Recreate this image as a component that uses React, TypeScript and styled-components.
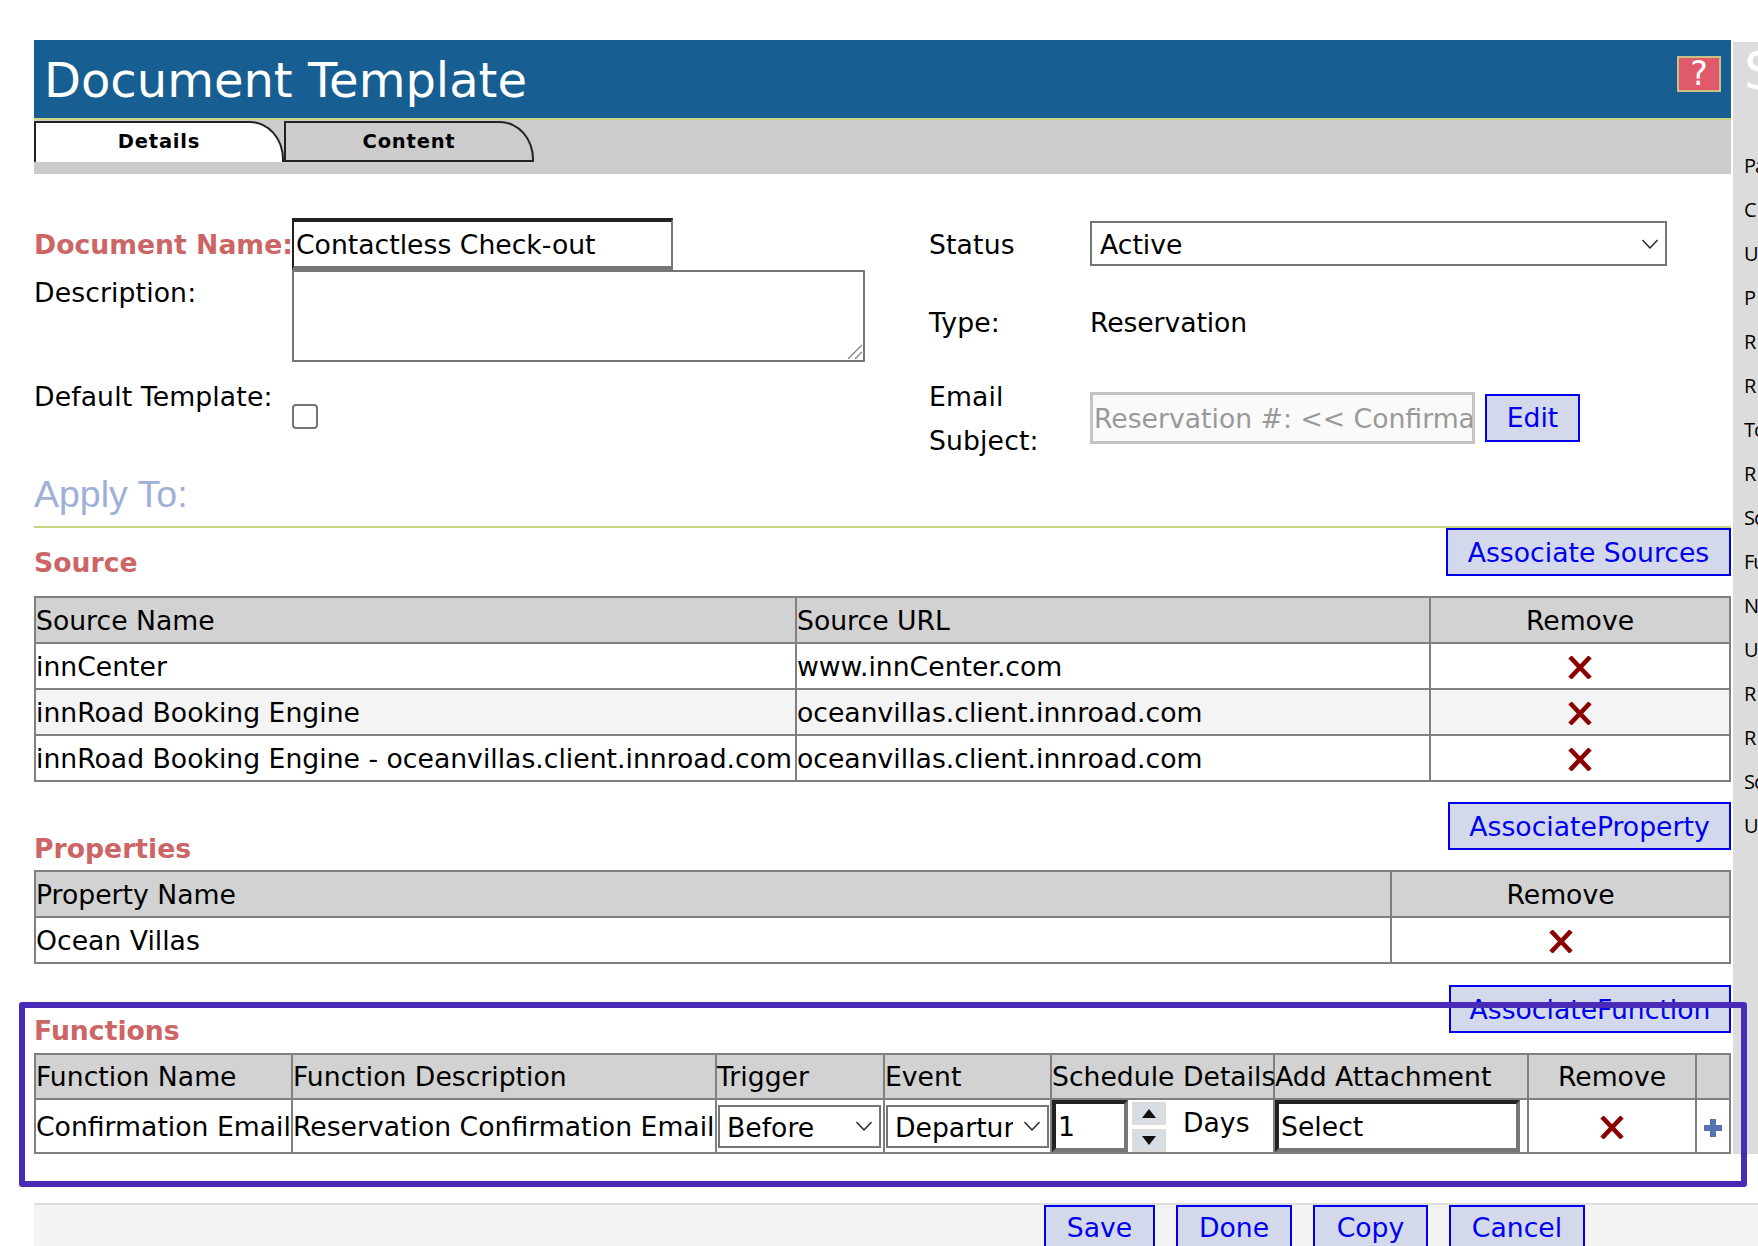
import React from "react";
import styled, { createGlobalStyle } from "styled-components";

const Global = createGlobalStyle`
  html, body { margin: 0; padding: 0; background: #fff; }
  body { width: 1758px; height: 1246px; overflow: hidden; font-family: "DejaVu Sans", Verdana, sans-serif; font-size: 26.67px; color: #000; }
`;

const chevron = `url("data:image/svg+xml,%3Csvg xmlns='http://www.w3.org/2000/svg' width='18' height='10' viewBox='0 0 18 10'%3E%3Cpath d='M1.5 1 L9 9 L16.5 1' fill='none' stroke='%23222' stroke-width='1.4'/%3E%3C/svg%3E")`;

const Page = styled.div`
  width: 1758px;
  height: 1246px;
  overflow: hidden;
  padding-top: 40px;
  box-sizing: border-box;
`;
const TopRow = styled.div`display: flex; align-items: stretch;`;
const Main = styled.main`width: 1697px; margin-left: 34px; flex: none;`;

const Sidebar = styled.aside`
  flex: 1;
  min-width: 0;
  margin: 2px 0 0 2px;
  padding-left: 11px;
  background: #dcdcdc;
  overflow: hidden;
  white-space: nowrap;
`;
const SideTitle = styled.div`
  height: 102px;
  font-size: 52px;
  line-height: 58px;
  color: #fff;
`;
const SideItem = styled.div`
  height: 44px;
  line-height: 44px;
  font-family: "Open Sans", sans-serif;
  font-size: 20px;
  letter-spacing: -1px;
`;

const Header = styled.header`
  height: 78px;
  background: #175e93;
  border-bottom: 2px solid #ccd67e;
  display: flex;
  align-items: center;
  justify-content: space-between;
  padding: 0 10px 0 10px;
`;
const Title = styled.h1`
  margin: 2px 0 0;
  font-size: 48px;
  font-weight: 400;
  color: #fff;
`;
const Help = styled.div`
  align-self: flex-start;
  width: 44px;
  height: 36px;
  margin-top: 16px;
  box-sizing: border-box;
  background: #e15a6c;
  border: 2px solid #c9c081;
  color: #fff;
  font-size: 33px;
  line-height: 32px;
  text-align: center;
`;

const TabBand = styled.nav`
  height: 54px;
  box-sizing: border-box;
  padding-top: 1px;
  background: #cccccc;
  display: flex;
`;
const Tab = styled.div<{ $active?: boolean }>`
  width: 250px;
  height: 41px;
  box-sizing: border-box;
  border: 2px solid #222;
  border-bottom: ${(p) => (p.$active ? "none" : "2px solid #222")};
  border-top-right-radius: 34px 38px;
  background: ${(p) => (p.$active ? "#fff" : "#cccccc")};
  font-size: 19.5px;
  font-weight: 700;
  letter-spacing: 0.8px;
  line-height: 38px;
  text-align: center;
`;

const FormArea = styled.section`
  display: flex;
  padding-top: 44px;
`;
const LeftForm = styled.div`
  width: 895px;
  flex: none;
  display: grid;
  grid-template-columns: 258px 1fr;
  grid-template-rows: 52px 92px 101px;
  align-content: start;
`;
const Label = styled.div<{ $required?: boolean }>`
  line-height: 44px;
  font-weight: ${(p) => (p.$required ? 700 : 400)};
  color: ${(p) => (p.$required ? "#cc6666" : "#000")};
  letter-spacing: ${(p) => (p.$required ? "0" : "0.12px")};
  white-space: nowrap;
`;
const NameLabel = styled(Label)`padding-top: 1px; line-height: 52px;`;
const DescLabel = styled(Label)`padding-top: 1px;`;
const DefaultLabel = styled(Label)`padding-top: 13px;`;

const InsetInput = styled.input<{ $w: number }>`
  display: block;
  width: ${(p) => p.$w}px;
  height: 52px;
  box-sizing: border-box;
  padding: 0 0 0 2px;
  margin: 0;
  border-style: solid;
  border-width: 4px;
  border-color: #222 #767676 #767676 #222;
  background: #fff;
  outline: none;
  font: inherit;
  color: #000;
`;
const NameInput = styled(InsetInput)`
  border-width: 4px 2px 4px 2px;
`;
const DescWrap = styled.div`
  position: relative;
  width: 573px;
  height: 92px;
`;
const DescBox = styled.textarea`
  display: block;
  width: 573px;
  height: 92px;
  box-sizing: border-box;
  border: 2px solid #767676;
  background: #fff;
  margin: 0;
  padding: 0;
  outline: none;
  resize: none;
  font: inherit;
`;
const Grip = styled.svg`
  position: absolute;
  right: 3px;
  bottom: 3px;
`;
const Check = styled.input`
  appearance: none;
  display: block;
  width: 26px;
  height: 25px;
  box-sizing: border-box;
  margin: 42px 0 0 0;
  border: 2px solid #767676;
  border-radius: 4px;
  background: #fff;
`;

const RightForm = styled.div`
  flex: 1;
  display: grid;
  grid-template-columns: 161px 1fr;
  grid-template-rows: 51px 106px 88px;
  align-content: start;
`;
const StatusLabel = styled(Label)`padding-top: 1px; line-height: 52px;`;
const StatusSelect = styled.select`
  display: block;
  appearance: none;
  width: 577px;
  height: 45px;
  margin-top: 3px;
  box-sizing: border-box;
  padding: 2px 30px 0 8px;
  border: 2px solid #767676;
  border-radius: 0;
  background: #fff ${chevron} no-repeat right 6px center;
  font: inherit;
  color: #000;
`;
const TypeLabel = styled(Label)`padding-top: 32px;`;
const TypeValue = styled(TypeLabel)`letter-spacing: -0.1px;`;
const SubjectRow = styled.div`
  display: flex;
  align-items: flex-start;
  gap: 10px;
  padding-top: 17px;
`;
const SubjectInput = styled.input`
  width: 385px;
  height: 52px;
  box-sizing: border-box;
  padding: 0 0 0 1px;
  border: 3px solid #c4c4c4;
  background: #fafafa;
  color: #999;
  font: inherit;
  outline: none;
`;

const ActionButton = styled.button<{ $w: number }>`
  flex: none;
  width: ${(p) => p.$w}px;
  height: 48px;
  box-sizing: border-box;
  padding: 2px 0 0;
  border: 2px solid #0000ee;
  background: #d3d9ea;
  color: #0000ee;
  font: inherit;
  line-height: 42px;
  white-space: nowrap;
`;
const EditButton = styled(ActionButton)`margin-top: 2px; padding: 0;`;
const FooterButton = styled(ActionButton)`padding: 0 0 3px;`;

const ApplyTo = styled.h2`
  margin: 0;
  height: 65px;
  box-sizing: border-box;
  padding-top: 8px;
  border-bottom: 2px solid #c8d484;
  font-family: "Liberation Sans", Arial, sans-serif;
  font-size: 37.5px;
  line-height: 46px;
  font-weight: 400;
  color: #9fb0d8;
`;

const Section = styled.section<{ $top?: number }>`
  position: relative;
  margin-top: ${(p) => p.$top ?? 0}px;
`;
const SectionHead = styled.div<{ $h: number }>`
  height: ${(p) => p.$h}px;
  display: flex;
  justify-content: space-between;
  align-items: flex-start;
`;
const SectionTitle = styled.h3<{ $top: number }>`
  margin: 0;
  padding-top: ${(p) => p.$top}px;
  font-size: 26.67px;
  line-height: 44px;
  font-weight: 700;
  color: #cc6666;
`;

const Grid = styled.table`
  width: 1697px;
  table-layout: fixed;
  border-collapse: collapse;
  font-size: 26.67px;
  box-sizing: border-box;
`;
const Col = styled.col<{ $w?: number }>`
  width: ${(p) => (p.$w ? `${p.$w}px` : "auto")};
`;
const Th = styled.th<{ $center?: boolean }>`
  height: 44px;
  padding: 0;
  border: 2px solid #808080;
  background: #d2d2d2;
  font-weight: 400;
  text-align: ${(p) => (p.$center ? "center" : "left")};
  white-space: nowrap;
`;
const FuncTh = styled(Th)`height: 43px;`;
const Td = styled.td<{ $center?: boolean; $alt?: boolean }>`
  height: 44px;
  padding: 0;
  border: 2px solid #808080;
  background: ${(p) => (p.$alt ? "#f4f4f4" : "#fff")};
  text-align: ${(p) => (p.$center ? "center" : "left")};
  white-space: nowrap;
  vertical-align: middle;
`;
const FuncTd = styled(Td)`height: 52px;`;

const IconWrap = styled.span`
  display: inline-flex;
  vertical-align: middle;
  margin-top: -1px;
`;
const RemoveIcon = () => (
  <IconWrap>
    <svg width="24" height="23" viewBox="0 0 24 23" aria-hidden="true">
      <path d="M2 1 L22 22 M22 1 L2 22" stroke="#8b0000" strokeWidth="4.6" fill="none" />
    </svg>
  </IconWrap>
);
const AddIcon = () => (
  <IconWrap>
    <svg width="20" height="20" viewBox="0 0 20 20" aria-hidden="true">
      <path d="M7 1 H13 V7 H19 V13 H13 V19 H7 V13 H1 V7 H7 Z" fill="#5572b5" />
    </svg>
  </IconWrap>
);

const CellSelect = styled.select`
  display: block;
  appearance: none;
  height: 43px;
  width: 163px;
  margin: 0 0 0 1px;
  box-sizing: border-box;
  padding: 2px 34px 0 7px;
  border: 2px solid #767676;
  border-radius: 0;
  background: #fff ${chevron} no-repeat right 6px center;
  color: #000;
  font: inherit;
`;
const ScheduleCell = styled.div`
  display: flex;
  align-items: flex-start;
  height: 52px;
`;
const SpinnerColumn = styled.div`
  width: 34px;
  margin-left: 4px;
  padding-top: 2px;
  display: flex;
  flex-direction: column;
  gap: 4px;
`;
const SpinButton = styled.button`
  width: 34px;
  height: 23px;
  padding: 0;
  box-sizing: border-box;
  border: 3px solid #dcdcdc;
  background: #d6dde4;
  display: flex;
  align-items: center;
  justify-content: center;
`;
const Days = styled.span`
  margin-left: 17px;
  line-height: 46px;
`;

const Highlight = styled.div`
  position: absolute;
  left: -15px;
  right: -16px;
  top: 17px;
  bottom: -33px;
  border: 6px solid #4a2bb8;
  border-radius: 3px;
  pointer-events: none;
  z-index: 2;
`;

const Footer = styled.footer`
  margin: 49px 0 0 34px;
  height: 60px;
  box-sizing: border-box;
  padding: 0 0 0 1010px;
  border-top: 2px solid #dddddd;
  background: #f3f3f3;
  display: flex;
  gap: 21px;
`;

const sideItems = ["Pa", "C", "U", "P", "R", "R", "To", "R", "Sc", "Fu", "N", "U", "R", "R", "Sc", "U"];
const sources = [
  ["innCenter", "www.innCenter.com"],
  ["innRoad Booking Engine", "oceanvillas.client.innroad.com"],
  ["innRoad Booking Engine - oceanvillas.client.innroad.com", "oceanvillas.client.innroad.com"],
];

export default function App() {
  return (
    <Page>
      <Global />
      <TopRow>
        <Main>
          <Header>
            <Title>Document Template</Title>
            <Help>?</Help>
          </Header>
          <TabBand>
            <Tab $active>Details</Tab>
            <Tab>Content</Tab>
          </TabBand>

          <FormArea>
            <LeftForm>
              <NameLabel $required>Document Name:</NameLabel>
              <NameInput $w={381} defaultValue="Contactless Check-out" />
              <DescLabel>Description:</DescLabel>
              <DescWrap>
                <DescBox />
                <Grip width="15" height="15" viewBox="0 0 15 15" aria-hidden="true">
                  <path d="M1 15 L15 1 M8 15 L15 8" stroke="#777" strokeWidth="1.2" fill="none" />
                </Grip>
              </DescWrap>
              <DefaultLabel>Default Template:</DefaultLabel>
              <Check type="checkbox" />
            </LeftForm>
            <RightForm>
              <StatusLabel>Status</StatusLabel>
              <StatusSelect defaultValue="Active"><option>Active</option></StatusSelect>
              <TypeLabel>Type:</TypeLabel>
              <TypeValue>Reservation</TypeValue>
              <Label>Email<br />Subject:</Label>
              <SubjectRow>
                <SubjectInput disabled value="Reservation #: << Confirmation Number >>" readOnly />
                <EditButton $w={95}>Edit</EditButton>
              </SubjectRow>
            </RightForm>
          </FormArea>

          <ApplyTo>Apply To:</ApplyTo>

          <Section>
            <SectionHead $h={68}>
              <SectionTitle $top={13}>Source</SectionTitle>
              <ActionButton $w={285}>Associate Sources</ActionButton>
            </SectionHead>
            <Grid>
              <colgroup><Col $w={761} /><Col $w={634} /><Col /></colgroup>
              <thead>
                <tr><Th>Source Name</Th><Th>Source URL</Th><Th $center>Remove</Th></tr>
              </thead>
              <tbody>
                {sources.map(([name, url], i) => (
                  <tr key={name}>
                    <Td $alt={i === 1}>{name}</Td>
                    <Td $alt={i === 1}>{url}</Td>
                    <Td $alt={i === 1} $center><RemoveIcon /></Td>
                  </tr>
                ))}
              </tbody>
            </Grid>
          </Section>

          <Section $top={20}>
            <SectionHead $h={68}>
              <SectionTitle $top={25}>Properties</SectionTitle>
              <ActionButton $w={283}>AssociateProperty</ActionButton>
            </SectionHead>
            <Grid>
              <colgroup><Col $w={1356} /><Col /></colgroup>
              <thead>
                <tr><Th>Property Name</Th><Th $center>Remove</Th></tr>
              </thead>
              <tbody>
                <tr><Td>Ocean Villas</Td><Td $center><RemoveIcon /></Td></tr>
              </tbody>
            </Grid>
          </Section>

          <Section $top={21}>
            <SectionHead $h={68}>
              <SectionTitle $top={24}>Functions</SectionTitle>
              <ActionButton $w={282}>AssociateFunction</ActionButton>
            </SectionHead>
            <Grid>
              <colgroup>
                <Col $w={257} /><Col $w={424} /><Col $w={168} /><Col $w={167} />
                <Col $w={223} /><Col $w={254} /><Col $w={168} /><Col />
              </colgroup>
              <thead>
                <tr>
                  <FuncTh>Function Name</FuncTh>
                  <FuncTh>Function Description</FuncTh>
                  <FuncTh>Trigger</FuncTh>
                  <FuncTh>Event</FuncTh>
                  <FuncTh>Schedule Details</FuncTh>
                  <FuncTh>Add Attachment</FuncTh>
                  <FuncTh $center>Remove</FuncTh>
                  <FuncTh />
                </tr>
              </thead>
              <tbody>
                <tr>
                  <FuncTd>Confirmation Email</FuncTd>
                  <FuncTd>Reservation Confirmation Email</FuncTd>
                  <FuncTd>
                    <CellSelect defaultValue="Before"><option>Before</option></CellSelect>
                  </FuncTd>
                  <FuncTd>
                    <CellSelect defaultValue="Departure"><option>Departure</option></CellSelect>
                  </FuncTd>
                  <FuncTd>
                    <ScheduleCell>
                      <InsetInput $w={76} defaultValue="1" />
                      <SpinnerColumn>
                        <SpinButton aria-label="Increase">
                          <svg width="14" height="9" viewBox="0 0 14 9" aria-hidden="true"><path d="M7 0 L14 9 H0 Z" fill="#111" /></svg>
                        </SpinButton>
                        <SpinButton aria-label="Decrease">
                          <svg width="14" height="9" viewBox="0 0 14 9" aria-hidden="true"><path d="M0 0 H14 L7 9 Z" fill="#111" /></svg>
                        </SpinButton>
                      </SpinnerColumn>
                      <Days>Days</Days>
                    </ScheduleCell>
                  </FuncTd>
                  <FuncTd><InsetInput $w={245} defaultValue="Select" /></FuncTd>
                  <FuncTd $center><RemoveIcon /></FuncTd>
                  <FuncTd $center><AddIcon /></FuncTd>
                </tr>
              </tbody>
            </Grid>
            <Highlight />
          </Section>
        </Main>
        <Sidebar>
          <SideTitle>S</SideTitle>
          {sideItems.map((t, i) => <SideItem key={i}>{t}</SideItem>)}
        </Sidebar>
      </TopRow>
      <Footer>
        <FooterButton $w={111}>Save</FooterButton>
        <FooterButton $w={116}>Done</FooterButton>
        <FooterButton $w={115}>Copy</FooterButton>
        <FooterButton $w={136}>Cancel</FooterButton>
      </Footer>
    </Page>
  );
}
